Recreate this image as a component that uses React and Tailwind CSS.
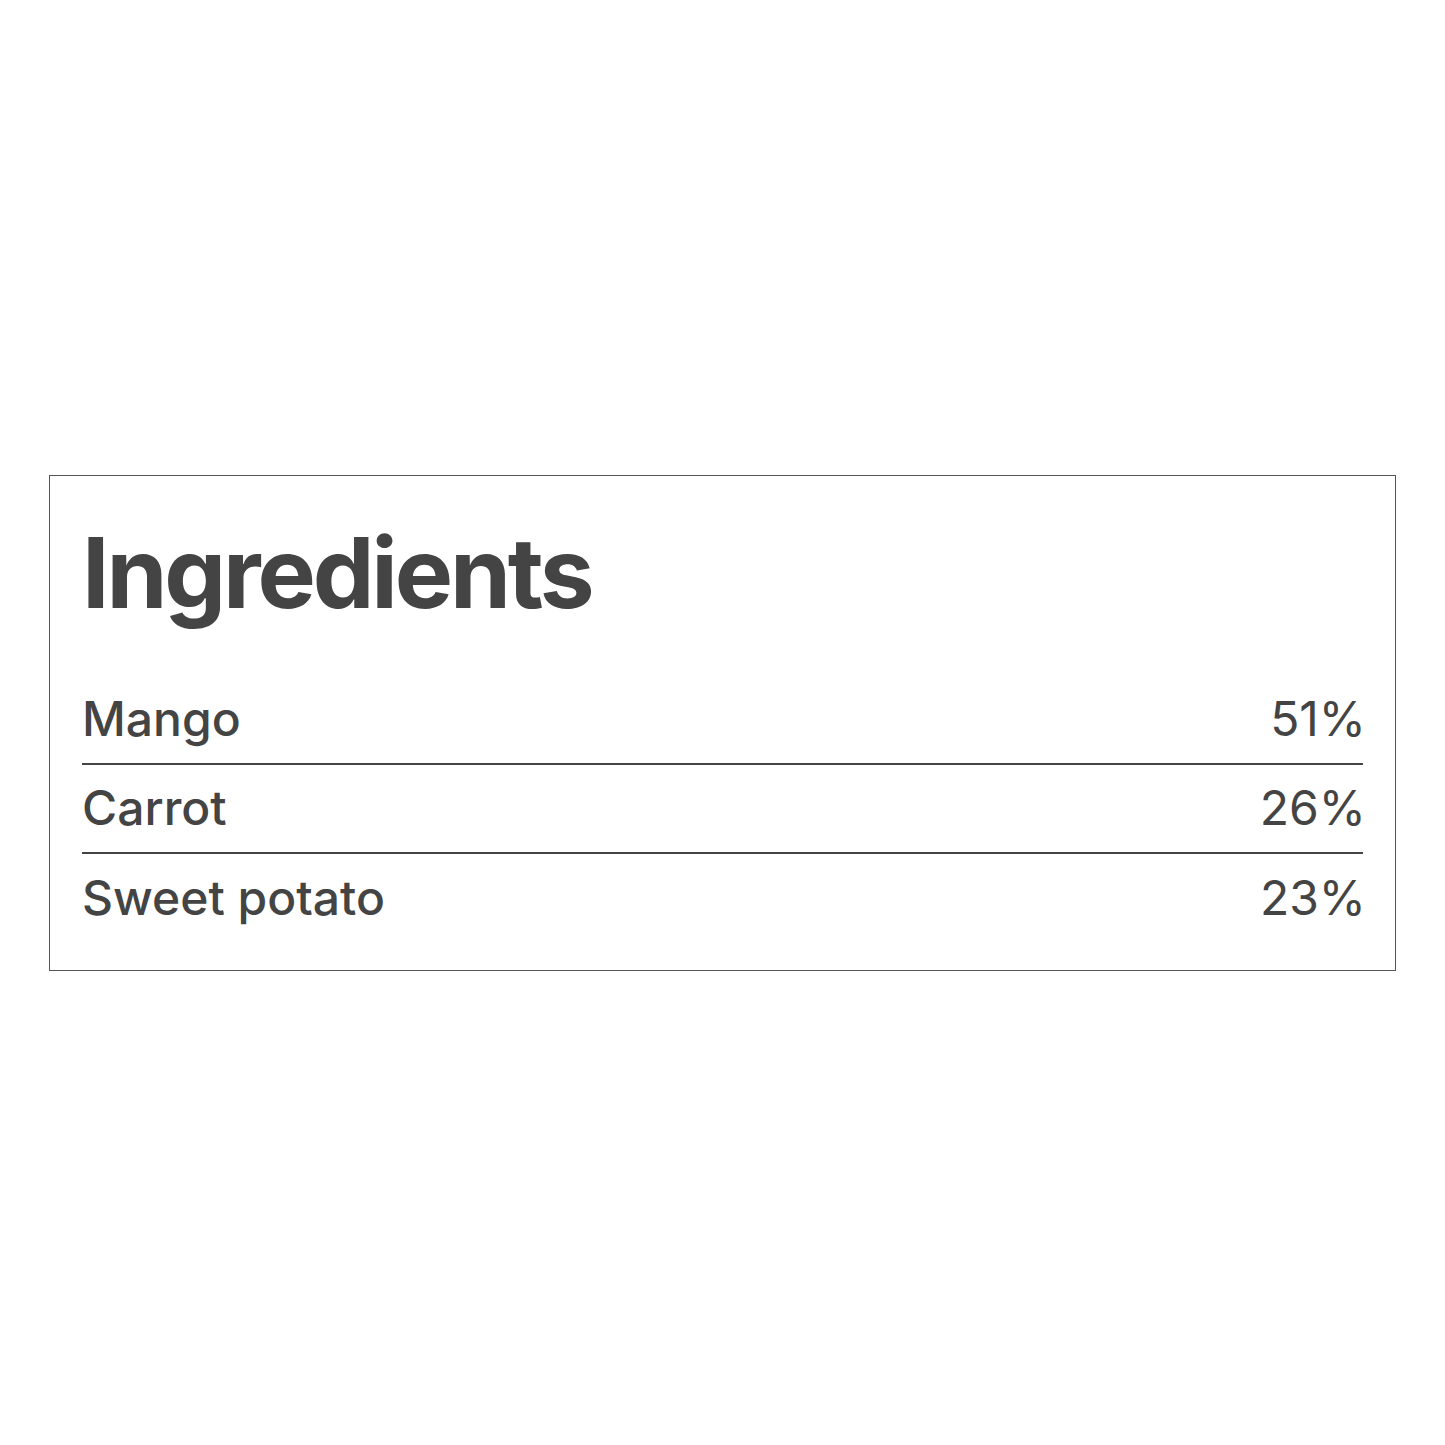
import React from 'react';

const ingredients = [
  { name: 'Mango', share: '51%' },
  { name: 'Carrot', share: '26%' },
  { name: 'Sweet potato', share: '23%' },
];

const App = () => {
  return (
    <div
      className="min-h-[1445px] flex items-center bg-white px-[49px]"
      style={{ fontFamily: 'Inter, "Noto Sans", sans-serif' }}
    >
      <section className="w-full border border-[#555] px-8 pt-[48px] pb-[27px] text-[#444]">
        <h2 className="text-[98px] leading-none font-bold tracking-[-0.032em]">Ingredients</h2>
        <ul className="mt-[54px]">
          {ingredients.map((item, index) => (
            <li
              key={item.name}
              className={`flex h-[89px] items-center justify-between text-[48px] font-medium ${
                index < ingredients.length - 1 ? 'border-b-2 border-[#444]' : ''
              }`}
            >
              <span>{item.name}</span>
              <span className="font-normal -mr-[3px]">{item.share}</span>
            </li>
          ))}
        </ul>
      </section>
    </div>
  );
};

export default App;
